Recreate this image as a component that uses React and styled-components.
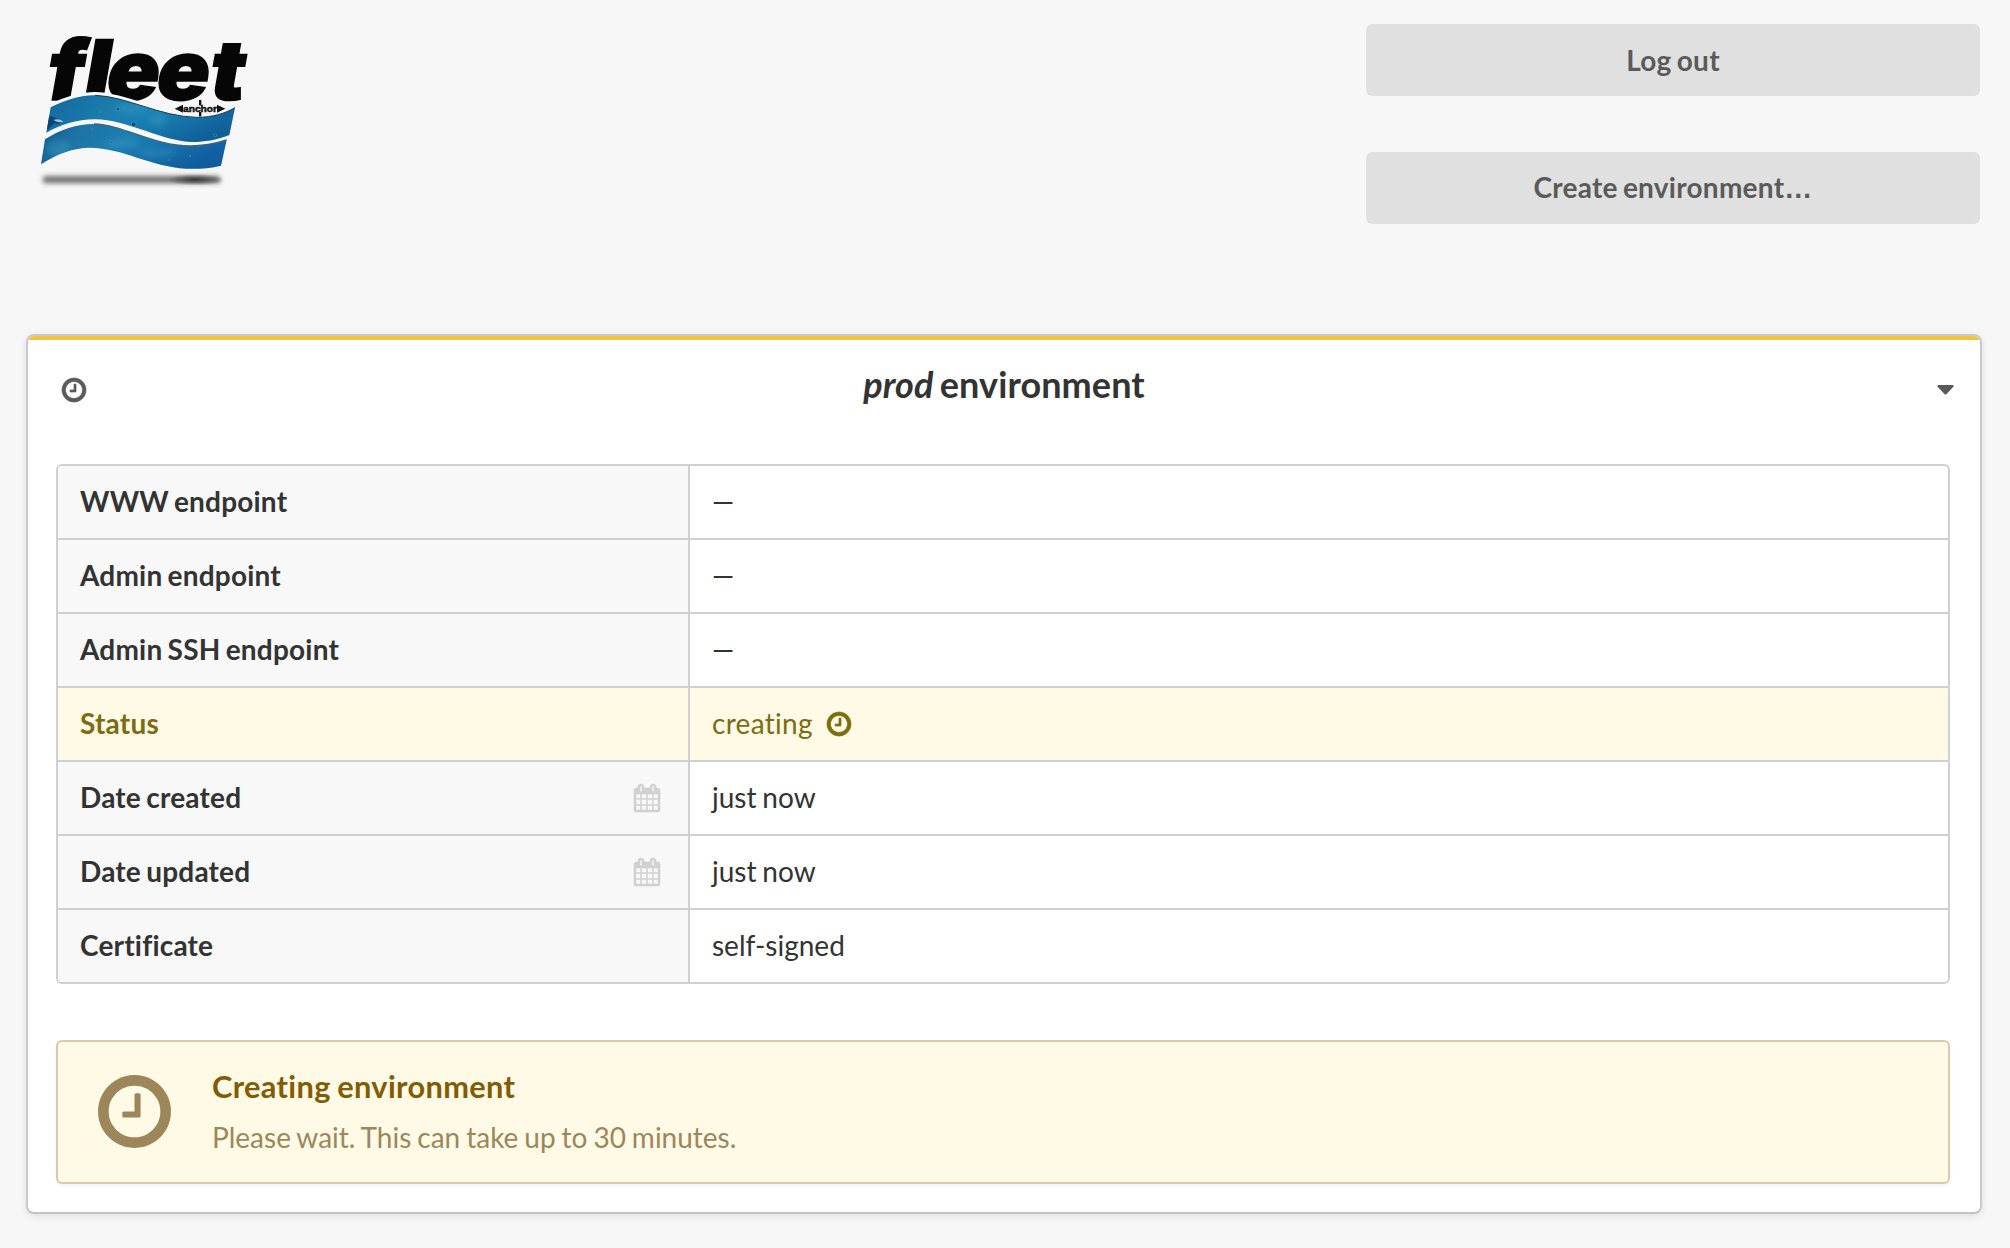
import React from 'react';
import styled, { createGlobalStyle } from 'styled-components';

const GlobalStyle = createGlobalStyle`
  * { box-sizing: border-box; }
  body {
    margin: 0;
    background: #f7f7f7;
    color: #333;
    font-family: Lato, "Liberation Sans", sans-serif;
    font-size: 28px;
    line-height: 36px;
    font-variant-ligatures: none;
  }
`;

const Page = styled.div`
  min-height: 1248px;
  padding: 24px 28px 34px 26px;
`;

const Header = styled.header`
  display: flex;
  justify-content: space-between;
  height: 310px;
  padding-right: 2px;
`;

const LogoArt = styled.svg`
  width: 250px;
  height: 180px;
  margin: -4px 0 0 -6px;
`;

const Actions = styled.nav`
  display: flex;
  flex-direction: column;
  gap: 56px;
  width: 614px;
`;

const Button = styled.button`
  height: 72px;
  padding: 0 0 1px;
  border: 0;
  border-radius: 6px;
  background: #e0e0e0;
  color: #5a5a5a;
  font: 700 28px/36px Lato, "Liberation Sans", sans-serif;
  letter-spacing: 0.25px;
  word-spacing: -1.8px;
`;

const Ellipsis = styled.span`
  font-family: "Liberation Sans", sans-serif;
`;

const Card = styled.section`
  height: 880px;
  border: 2px solid #cacaca;
  border-bottom-color: #c2c2c2;
  border-radius: 8px;
  background: #fff;
  box-shadow: 0 2px 8px rgba(0, 0, 0, 0.1);
  overflow: hidden;
`;

const CardInner = styled.div`
  height: 876px;
  border-top: 4px solid #f2c33c;
  padding: 0 30px 0 28px;
`;

const CardHead = styled.div`
  display: grid;
  grid-template-columns: 1fr auto 1fr;
  align-items: start;
  height: 124px;
  margin: 0 -4px 0 -2px;
  color: #5a5a5a;
`;

const Title = styled.h2`
  margin: 22px 0 0;
  color: #333;
  font-size: 36px;
  line-height: 44px;
  font-weight: 700;
  letter-spacing: 0.1px;
  word-spacing: -2.6px;
`;

const Glyph = styled.svg`
  display: block;
  flex: none;
  width: ${(p) => p.$w}px;
  height: ${(p) => p.$h}px;
  margin: ${(p) => p.$m || 0};
  justify-self: ${(p) => p.$side || 'start'};
  overflow: visible;
  fill: currentColor;
  stroke: currentColor;
  stroke-width: ${(p) => p.$stroke || 0};
`;

const Table = styled.dl`
  margin: 0;
  border: 2px solid #d0d0d0;
  border-radius: 6px;
  overflow: hidden;
`;

const Row = styled.div`
  display: grid;
  grid-template-columns: 632px 1fr;
  height: ${(p) => (p.$last ? 72 : 74)}px;
  border-bottom: ${(p) => (p.$last ? '0' : '2px solid #d0d0d0')};
  background: ${(p) => (p.$warn ? '#fffae6' : 'transparent')};
  color: ${(p) => (p.$warn ? '#7d6c10' : '#333')};
`;

const Label = styled.dt`
  display: flex;
  align-items: center;
  justify-content: space-between;
  padding: 0 28px 0 22px;
  border-right: 2px solid #d0d0d0;
  background: ${(p) => (p.$warn ? 'transparent' : '#f8f8f8')};
  font-weight: 700;
  letter-spacing: 0.2px;
  word-spacing: -1.8px;
`;

const Value = styled.dd`
  display: flex;
  align-items: center;
  margin: 0;
  padding-left: 22px;
  letter-spacing: ${(p) => (p.$warn ? 0.3 : 0)}px;
  word-spacing: -1.3px;
`;

const CellText = styled.span`
  padding-bottom: 2px;
`;

const Message = styled.aside`
  display: flex;
  height: 144px;
  margin-top: 56px;
  padding: 0 40px;
  border: 2px solid #d9caab;
  border-radius: 6px;
  background: #fffae6;
  box-shadow: 0 2px 4px rgba(0, 0, 0, 0.05);
  color: #9e865b;
`;

const MessageText = styled.div`
  padding: 26px 0 0 41px;
`;

const MessageTitle = styled.h3`
  margin: 0 0 13px;
  color: #825c01;
  font-size: 30.8px;
  line-height: 38px;
  letter-spacing: 0.33px;
  word-spacing: -1.4px;
`;

const MessageBody = styled.p`
  margin: 0;
  word-spacing: -1.2px;
`;

const Clock = ({ size, m, stroke }) => (
  <Glyph viewBox="0 128 1536 1536" $w={size} $h={size} $m={m} $stroke={stroke}>
    <path d="M896 544v448q0 14-9 23t-23 9h-320q-14 0-23-9t-9-23v-64q0-14 9-23t23-9h224v-352q0-14 9-23t23-9h64q14 0 23 9t9 23zm416 352q0-148-73-273t-198-198-273-73-273 73-198 198-73 273 73 273 198 198 273 73 273-73 198-198 73-273zm224 0q0 209-103 385.5t-279.5 279.5-385.5 103-385.5-103-279.5-279.5-103-385.5 103-385.5 279.5-279.5 385.5-103 385.5 103 279.5 279.5 103 385.5z" />
  </Glyph>
);

const CalendarGlyph = styled(Glyph)`
  color: #d1d1d1;
`;

const Calendar = () => (
  <CalendarGlyph viewBox="0 0 1664 1792" $w={26} $h={28} $stroke={36}>
    <path d="M128 1664h288v-288h-288v288zm352 0h320v-288h-320v288zm-352-352h288v-320h-288v320zm352 0h320v-320h-320v320zm-352-384h288v-288h-288v288zm736 736h320v-288h-320v288zm-384-736h320v-288h-320v288zm768 736h288v-288h-288v288zm-384-352h320v-320h-320v320zm-352-864v-288q0-13-9.5-22.5t-22.5-9.5h-64q-13 0-22.5 9.5t-9.5 22.5v288q0 13 9.5 22.5t22.5 9.5h64q13 0 22.5-9.5t9.5-22.5zm736 864h288v-320h-288v320zm-384-384h320v-288h-320v288zm384 0h288v-288h-288v288zm32-480v-288q0-13-9.5-22.5t-22.5-9.5h-64q-13 0-22.5 9.5t-9.5 22.5v288q0 13 9.5 22.5t22.5 9.5h64q13 0 22.5-9.5t9.5-22.5zm384-64v1280q0 52-38 90t-90 38h-1408q-52 0-90-38t-38-90v-1280q0-52 38-90t90-38h128v-96q0-66 47-113t113-47h64q66 0 113 47t47 113v96h384v-96q0-66 47-113t113-47h64q66 0 113 47t47 113v96h128q52 0 90 38t38 90z" />
  </CalendarGlyph>
);

const WAVE_TOP =
  'M92 262C135 241 180 225 225 226C320 229 420 290 530 292C580 292 615 280 645 263L628 345C590 360 550 366 520 366C430 366 320 298 225 298C170 298 120 315 79 338Z';
const WAVE_LOW =
  'M75 358C120 329 170 312 222 312C310 314 400 377 510 378C555 378 595 368 620 360L603 437C570 445 535 447 500 446C390 440 310 384 210 383C160 383 110 402 63 433Z';

const Logo = () => (
  <LogoArt viewBox="0 0 750 540" role="img" aria-label="fleet anchor">
    <defs>
      <linearGradient id="sea1" x1="0" y1="0" x2="1" y2="0.2">
        <stop offset="0" stopColor="#14679c" />
        <stop offset="0.4" stopColor="#1b7fae" />
        <stop offset="0.65" stopColor="#1980b4" />
        <stop offset="1" stopColor="#12659f" />
      </linearGradient>
      <linearGradient id="sea2" x1="0" y1="0" x2="1" y2="0.2">
        <stop offset="0" stopColor="#0e5386" />
        <stop offset="0.2" stopColor="#1d72a4" />
        <stop offset="0.5" stopColor="#1c7fb2" />
        <stop offset="1" stopColor="#1262a8" />
      </linearGradient>
      <linearGradient id="depth" x1="0" y1="0" x2="0" y2="1">
        <stop offset="0.5" stopColor="#05406f" stopOpacity="0" />
        <stop offset="1" stopColor="#05406f" stopOpacity="0.2" />
      </linearGradient>
      <radialGradient id="dark">
        <stop offset="0" stopColor="#222" stopOpacity="0.75" />
        <stop offset="1" stopColor="#222" stopOpacity="0" />
      </radialGradient>
      <filter id="soft" x="-10%" y="-150%" width="120%" height="400%">
        <feGaussianBlur stdDeviation="8" />
      </filter>
      <filter id="haze" x="-50%" y="-50%" width="200%" height="200%">
        <feGaussianBlur stdDeviation="9" />
      </filter>
      <clipPath id="waves">
        <path d={WAVE_TOP} />
        <path d={WAVE_LOW} />
      </clipPath>
    </defs>
    <rect x="68" y="468" width="534" height="22" rx="11" fill="#444" opacity="0.75" filter="url(#soft)" />
    <ellipse cx="525" cy="479" rx="85" ry="18" fill="url(#dark)" />
    <g
      transform="translate(0 240) skewX(-10) scale(1.05 1)"
      fontFamily="Inter, 'Liberation Sans', sans-serif"
      fontWeight="900"
      fontSize="250"
      stroke="#060606"
      strokeWidth="4"
      fill="#060606"
    >
      <text x="68 174 237 380 533" y="0">fleet</text>
    </g>
    <path d={WAVE_TOP} fill="#f7f7f7" stroke="#f7f7f7" strokeWidth="20" />
    <path d={WAVE_TOP} fill="url(#sea1)" />
    <path d={WAVE_TOP} fill="url(#depth)" />
    <path d={WAVE_LOW} fill="url(#sea2)" />
    <path d={WAVE_LOW} fill="url(#depth)" />
    <path d="M225 226C320 229 420 290 530 292C580 292 615 280 645 263" fill="none" stroke="#163c50" strokeWidth="3" />
    <path d="M222 312C310 314 400 377 510 378C555 378 595 368 620 360" fill="none" stroke="#3c6875" strokeWidth="4" />
    <g clipPath="url(#waves)">
      <g filter="url(#haze)" fill="#4aa9cc" opacity="0.3">
        <ellipse cx="340" cy="265" rx="55" ry="14" />
        <ellipse cx="415" cy="300" rx="24" ry="20" />
        <ellipse cx="305" cy="370" rx="55" ry="14" />
        <ellipse cx="410" cy="400" rx="60" ry="12" />
        <ellipse cx="115" cy="385" rx="38" ry="26" />
      </g>
      <path d="M80 285Q105 290 130 304Q122 314 103 310L82 330Z" fill="#0b4777" />
      <path d="M100 300Q118 294 130 305Q117 311 100 300Z" fill="#9cc8d7" />
      <g fill="#0b4a80" stroke="#65b1d1" strokeWidth="1.5">
        <circle cx="294" cy="267" r="5" />
        <circle cx="341" cy="313" r="7" />
        <circle cx="392" cy="300" r="3" />
        <circle cx="586" cy="346" r="4" />
        <circle cx="242" cy="275" r="2" />
        <circle cx="311" cy="267" r="2" />
        <circle cx="216" cy="326" r="2" />
        <circle cx="275" cy="367" r="3" />
        <circle cx="448" cy="420" r="2" />
        <circle cx="510" cy="408" r="2" />
      </g>
    </g>
    <g fill="#111">
      <path d="M464 266L489 254V278Z" />
      <path d="M616 266L591 254V278Z" />
      <path d="M537 240H544V256H537Z" />
      <path d="M537 276H544V289H537Z" />
      <text
        x="489"
        y="275"
        fontFamily="'Liberation Sans', sans-serif"
        fontWeight="700"
        fontSize="29"
        stroke="#111"
        strokeWidth="1.5"
        textLength="102"
        lengthAdjust="spacingAndGlyphs"
      >
        anchor
      </text>
    </g>
  </LogoArt>
);

const ROWS = [
  { label: 'WWW endpoint', value: '—' },
  { label: 'Admin endpoint', value: '—' },
  { label: 'Admin SSH endpoint', value: '—' },
  { label: 'Status', value: 'creating', warn: true },
  { label: 'Date created', value: 'just now', date: true },
  { label: 'Date updated', value: 'just now', date: true },
  { label: 'Certificate', value: 'self-signed' },
];

export default function App() {
  return (
    <Page>
      <GlobalStyle />
      <Header>
        <Logo />
        <Actions>
          <Button>Log out</Button>
          <Button>
            Create environment<Ellipsis>…</Ellipsis>
          </Button>
        </Actions>
      </Header>
      <Card>
        <CardInner>
          <CardHead>
            <Clock size={24} m="37.5px 0 0 7.5px" stroke={45} />
            <Title>
              <em>prod</em> environment
            </Title>
            <Glyph viewBox="0 0 17 10" $w={17} $h={10} $m="45px 0 0" $side="end">
              <path d="M1.2 0H15.8Q17.4 .4 16.4 1.8L9.4 9.2Q8.5 10 7.6 9.2L.6 1.8Q-.4 .4 1.2 0Z" />
            </Glyph>
          </CardHead>
          <Table>
            {ROWS.map((row, i) => (
              <Row key={row.label} $warn={row.warn} $last={i === ROWS.length - 1}>
                <Label $warn={row.warn}>
                  <CellText>{row.label}</CellText>
                  {row.date && <Calendar />}
                </Label>
                <Value $warn={row.warn}>
                  <CellText>{row.value}</CellText>
                  {row.warn && <Clock size={24} m="0 0 0 14px" stroke={45} />}
                </Value>
              </Row>
            ))}
          </Table>
          <Message>
            <Clock size={73} m="33px 0 0" />
            <MessageText>
              <MessageTitle>Creating environment</MessageTitle>
              <MessageBody>Please wait. This can take up to 30 minutes.</MessageBody>
            </MessageText>
          </Message>
        </CardInner>
      </Card>
    </Page>
  );
}
